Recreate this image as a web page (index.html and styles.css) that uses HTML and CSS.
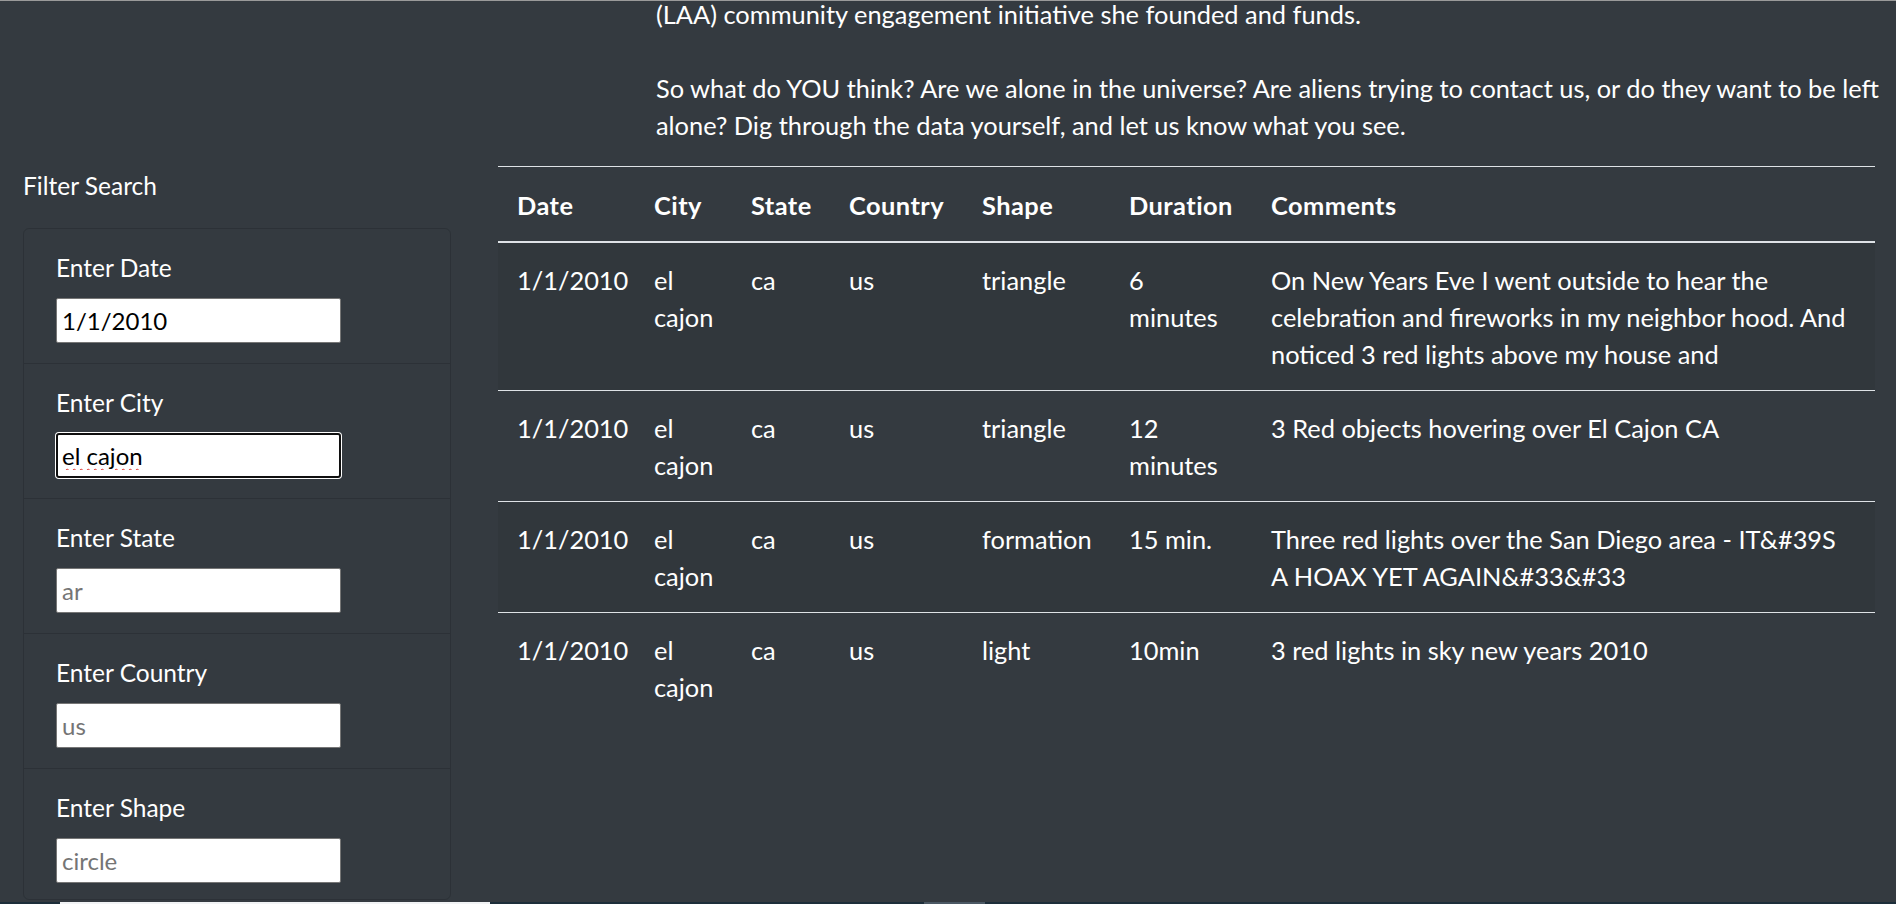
FILE: index.html
```html
<!DOCTYPE html>
<html lang="en">
<head>
<meta charset="utf-8">
<title>UFO Sightings</title>
<link rel="stylesheet" href="styles.css">
</head>
<body>
<div class="page">
  <section class="intro">
    <p>(LAA) community engagement initiative she founded and funds.<br><br>So what do YOU think? Are we alone in the universe? Are aliens trying to contact us, or do they want to be left alone? Dig through the data yourself, and let us know what you see.</p>
  </section>
  <div class="row">
    <aside class="sidebar">
      <div class="filter-title">Filter Search</div>
      <form class="card">
        <ul class="filters">
          <li class="filter"><label class="filter-label" for="datetime">Enter Date</label><input class="filter-input" id="datetime" type="text" value="1/1/2010" placeholder="1/10/2010"></li>
          <li class="filter"><label class="filter-label" for="city">Enter City</label><input class="filter-input is-focused spelled" id="city" type="text" value="el cajon" placeholder="roswell"></li>
          <li class="filter"><label class="filter-label" for="state">Enter State</label><input class="filter-input" id="state" type="text" placeholder="ar"></li>
          <li class="filter"><label class="filter-label" for="country">Enter Country</label><input class="filter-input" id="country" type="text" placeholder="us"></li>
          <li class="filter"><label class="filter-label" for="shape">Enter Shape</label><input class="filter-input" id="shape" type="text" placeholder="circle"></li>
        </ul>
      </form>
    </aside>
    <main class="results">
      <table class="ufo-table">
        <colgroup>
          <col class="c-date"><col class="c-city"><col class="c-state"><col class="c-country"><col class="c-shape"><col class="c-duration"><col class="c-comments">
        </colgroup>
        <thead>
          <tr><th>Date</th><th>City</th><th>State</th><th>Country</th><th>Shape</th><th>Duration</th><th>Comments</th></tr>
        </thead>
        <tbody>
          <tr><td>1/1/2010</td><td>el cajon</td><td>ca</td><td>us</td><td>triangle</td><td>6 minutes</td><td>On New Years Eve I went outside to hear the celebration and fireworks in my neighbor hood. And noticed 3 red lights above my house and</td></tr>
          <tr><td>1/1/2010</td><td>el cajon</td><td>ca</td><td>us</td><td>triangle</td><td>12 minutes</td><td>3 Red objects hovering over El Cajon CA</td></tr>
          <tr><td>1/1/2010</td><td>el cajon</td><td>ca</td><td>us</td><td>formation</td><td>15 min.</td><td>Three red lights over the San Diego area - IT&amp;#39S A HOAX YET AGAIN&amp;#33&amp;#33</td></tr>
          <tr><td>1/1/2010</td><td>el cajon</td><td>ca</td><td>us</td><td>light</td><td>10min</td><td>3 red lights in sky new years 2010</td></tr>
        </tbody>
      </table>
    </main>
  </div>
  <div class="bottom-strip">
    <span class="strip-button"></span>
    <span class="strip-thumb"></span>
  </div>
</div>
</body>
</html>
```

FILE: styles.css
```css
* { box-sizing: border-box; }

html, body {
  margin: 0;
  padding: 0;
}

body {
  background: #343a40;
  color: #ffffff;
  font-family: Lato, "Open Sans", sans-serif;
  font-size: 25.4px;
  line-height: 37px;
  overflow: hidden;
  border-top: 1px solid #9a9a9a;
}

.page {
  display: flex;
  flex-direction: column;
}

.intro {
  margin-top: -5px;
  padding: 0 8px 0 656px;
}

.intro p {
  margin: 0 0 22px;
}

.row {
  display: flex;
  align-items: flex-start;
}

.sidebar {
  flex: 0 0 475px;
  padding: 1px 24px 0 23px;
  font-size: 24.5px;
}

.filter-title {
  line-height: 37px;
}

.card {
  margin: 24px 0 2px;
  border: 1px solid rgba(0, 0, 0, 0.14);
  border-radius: 6px;
}

.filters {
  list-style: none;
  margin: 0;
  padding: 0;
}

.filter {
  display: flex;
  flex-direction: column;
  align-items: flex-start;
  gap: 12px;
  padding: 20px 33px 20px 32px;
  border-top: 1px solid rgba(0, 0, 0, 0.14);
}

.filter:first-child { border-top: 0; }
.filter:last-child { padding-bottom: 16px; }

.filter-label {
  line-height: 37px;
}

.filter-input {
  width: 285px;
  height: 45px;
  padding: 0 5px;
  border: 1px solid #767676;
  border-radius: 2px;
  background: #fff;
  color: #000;
  font-family: inherit;
  font-size: 24px;
  outline: none;
}

.filter-input::placeholder {
  color: #757575;
}

.filter-input.is-focused {
  border: 2px solid #101010;
  border-radius: 3px;
  padding: 0 4px;
  box-shadow: 0 0 0 1px #ffffff;
}

.filter-input.spelled {
  text-decoration: underline wavy #e0302a;
  text-decoration-thickness: 1px;
  text-underline-offset: 3px;
}

.results {
  flex: 1 1 auto;
  padding: 0 21px 0 23px;
}

.ufo-table {
  width: 100%;
  table-layout: fixed;
  border-collapse: collapse;
  color: #fff;
}

.c-date { width: 137px; }
.c-city { width: 97px; }
.c-state { width: 98px; }
.c-country { width: 133px; }
.c-shape { width: 147px; }
.c-duration { width: 142px; }
.c-comments { width: auto; }

.ufo-table th,
.ufo-table td {
  padding: 19px 19px 17px;
  text-align: left;
  vertical-align: top;
  border-top: 1px solid #dee2e6;
}

.ufo-table th {
  padding: 20px 19px 17px;
  font-weight: 700;
  letter-spacing: 0.45px;
  border-bottom: 2px solid #dee2e6;
}

.ufo-table tbody tr:first-child td { border-top: 0; }

.ufo-table tbody tr:nth-child(odd) {
  background: rgba(0, 0, 0, 0.05);
}

.bottom-strip {
  display: flex;
  height: 12px;
  background: #1d2e3a;
  padding-left: 60px;
}

.strip-button {
  width: 430px;
  background: #f1f3f5;
}

.strip-thumb {
  width: 61px;
  margin-left: 434px;
  background: #4b5864;
}
```
